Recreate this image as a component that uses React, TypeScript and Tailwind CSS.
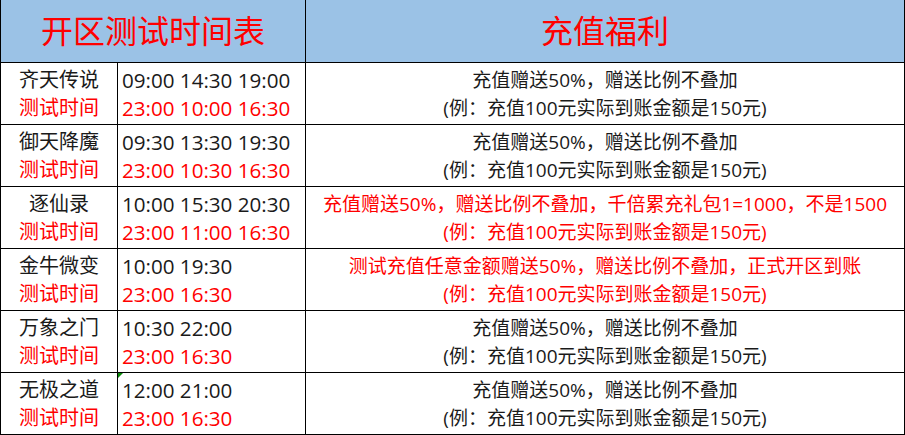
import React from "react";

type Row = {
  name: string;
  times: string;
  test: string;
  line1: string;
  red?: boolean;
};

const rows: Row[] = [
  { name: "齐天传说", times: "09:00 14:30 19:00", test: "23:00 10:00 16:30", line1: "充值赠送50%，赠送比例不叠加" },
  { name: "御天降魔", times: "09:30 13:30 19:30", test: "23:00 10:30 16:30", line1: "充值赠送50%，赠送比例不叠加" },
  { name: "逐仙录", times: "10:00 15:30 20:30", test: "23:00 11:00 16:30", line1: "充值赠送50%，赠送比例不叠加，千倍累充礼包1=1000，不是1500", red: true },
  { name: "金牛微变", times: "10:00 19:30", test: "23:00 16:30", line1: "测试充值任意金额赠送50%，赠送比例不叠加，正式开区到账", red: true },
  { name: "万象之门", times: "10:30 22:00", test: "23:00 16:30", line1: "充值赠送50%，赠送比例不叠加" },
  { name: "无极之道", times: "12:00 21:00", test: "23:00 16:30", line1: "充值赠送50%，赠送比例不叠加" },
];

export default function App() {
  return (
    <div
      className="w-[905px] h-[435px] bg-white border-l border-black"
      style={{ fontFamily: '"Open Sans", "Noto Sans CJK SC", sans-serif' }}
    >
      <div className="flex h-[63px] bg-[#9bc2e6] border-b border-black">
        <div className="w-[305px] border-r border-black flex items-center justify-center text-[32px] text-[#ff0000] leading-none">
          开区测试时间表
        </div>
        <div className="w-[599px] border-r border-black flex items-center justify-center text-[32px] text-[#ff0000] leading-none">
          充值福利
        </div>
      </div>
      {rows.map((r, i) => (
        <div key={i} className="flex h-[62px] border-b border-black">
          <div className="w-[117px] border-r border-black flex flex-col items-center justify-center text-[20px] leading-[28px]">
            <div className="text-[#1a1a1a]">{r.name}</div>
            <div className="text-[#ff0000]">测试时间</div>
          </div>
          <div className="relative w-[188px] border-r border-black flex flex-col justify-center pl-[4px] text-[20.6px] leading-[28px]">
            {i === 5 && (
              <div className="absolute left-0 top-0 w-0 h-0 border-t-[5px] border-t-[#0a8a0a] border-r-[5px] border-r-transparent" />
            )}
            <div className="text-[#1a1a1a] whitespace-nowrap">{r.times}</div>
            <div className="text-[#ff0000] whitespace-nowrap">{r.test}</div>
          </div>
          <div
            className={`w-[599px] border-r border-black flex flex-col items-center justify-center text-[19px] leading-[28px] ${
              r.red ? "text-[#ff0000]" : "text-[#1a1a1a]"
            }`}
          >
            <div className="whitespace-nowrap">{r.line1}</div>
            <div className="whitespace-nowrap">(例：充值100元实际到账金额是150元)</div>
          </div>
        </div>
      ))}
    </div>
  );
}
